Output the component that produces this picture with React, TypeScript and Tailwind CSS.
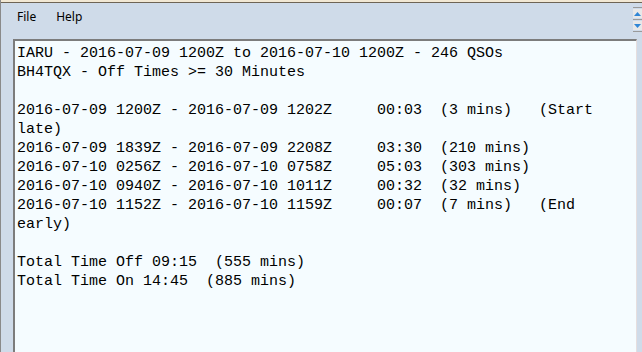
const LINES = [
  "IARU - 2016-07-09 1200Z to 2016-07-10 1200Z - 246 QSOs",
  "BH4TQX - Off Times >= 30 Minutes",
  "",
  "2016-07-09 1200Z - 2016-07-09 1202Z     00:03  (3 mins)   (Start",
  "late)",
  "2016-07-09 1839Z - 2016-07-09 2208Z     03:30  (210 mins)",
  "2016-07-10 0256Z - 2016-07-10 0758Z     05:03  (303 mins)",
  "2016-07-10 0940Z - 2016-07-10 1011Z     00:32  (32 mins)",
  "2016-07-10 1152Z - 2016-07-10 1159Z     00:07  (7 mins)   (End",
  "early)",
  "",
  "Total Time Off 09:15  (555 mins)",
  "Total Time On 14:45  (885 mins)",
];

function Spin() {
  return (
    <div className="absolute right-0 top-[7px] flex w-[9px] flex-col gap-[1px]">
      <div className="h-[1px] bg-[#9a9a9a]" />
      <div className="flex h-[9px] items-center justify-center bg-[#e8e8e8]">
        <svg width="7" height="4" viewBox="0 0 7 4"><path d="M3.5 0L7 4H0z" fill="#2f86d6" /></svg>
      </div>
      <div className="h-[1px] bg-[#9a9a9a]" />
      <div className="flex h-[9px] items-center justify-center bg-[#e8e8e8]">
        <svg width="7" height="4" viewBox="0 0 7 4"><path d="M0 0H7L3.5 4z" fill="#2f86d6" /></svg>
      </div>
      <div className="h-[1px] bg-[#9a9a9a]" />
    </div>
  );
}

export default function App() {
  return (
    <div className="relative flex h-[352px] w-[642px] flex-col overflow-hidden border-l border-[#8a8a8a] bg-[#cfdbe9]">
      <div className="h-[3px] border-b border-[#6e6455] bg-[#f2e8d4]" />
      <Spin />
      {/* menu */}
      <div className="flex h-[28px] items-center gap-[20px] pl-[16px] text-[12px] text-black" style={{ fontFamily: '"Noto Sans", "Liberation Sans", sans-serif' }}>
        <span>File</span>
        <span>Help</span>
      </div>
      <div className="h-[8px]" />
      {/* report box */}
      <div className="ml-[12px] mr-[5px] flex-1 border-l-2 border-t-2 border-r border-l-[#7c7c7c] border-t-[#7c7c7c] border-r-[#e6dede] bg-[#f5fcff] pl-[2px] pt-[3px]">
        <pre className="text-[15px] leading-[19px] text-black" style={{ fontFamily: '"Liberation Mono", "DejaVu Sans Mono", monospace' }}>
          {LINES.join("\n")}
        </pre>
      </div>
    </div>
  );
}
